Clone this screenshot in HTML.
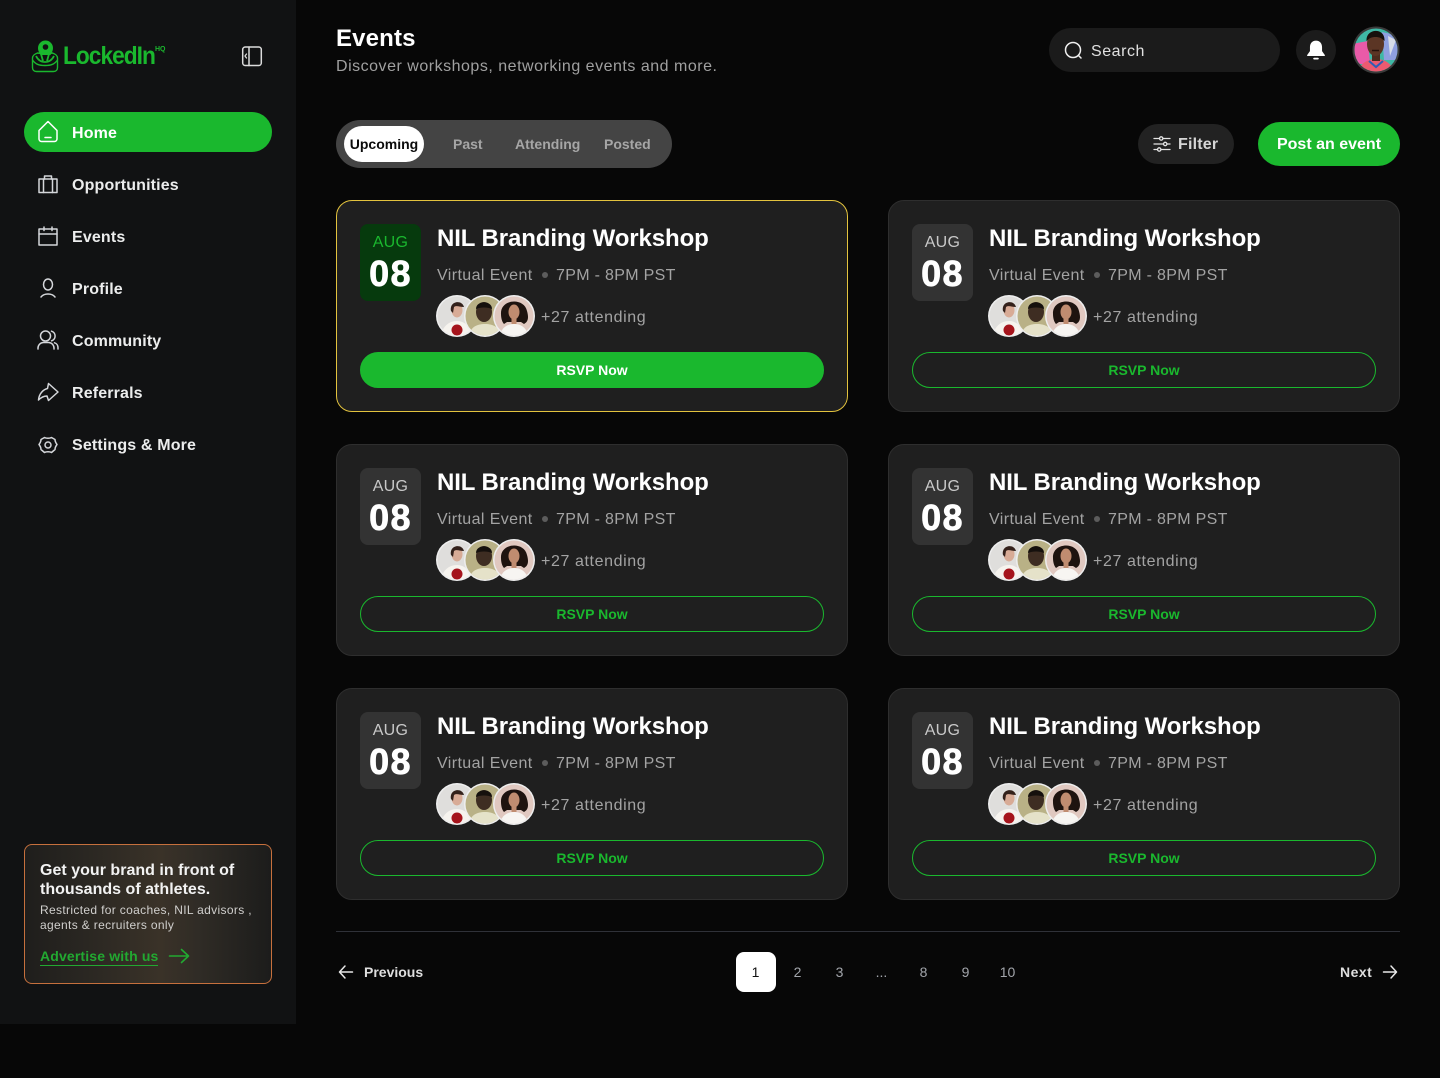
<!DOCTYPE html>
<html><head><meta charset="utf-8"><style>
*{box-sizing:border-box;margin:0;padding:0}
html,body{width:1440px;height:1078px;overflow:hidden;background:#070707;font-family:"Liberation Sans",sans-serif}
.a{position:absolute;white-space:nowrap}
#side{position:absolute;left:0;top:0;width:296px;height:1024px;background:#111213}
.nav{position:absolute;left:72px;font-size:16px;font-weight:bold;color:#eceded;line-height:20px;letter-spacing:.15px}
.ic{position:absolute;left:36px;width:24px;height:24px;fill:none;stroke:#d4d6da;stroke-width:1.5;stroke-linecap:round;stroke-linejoin:round}
.card{position:absolute;width:512px;height:212px;background:#1f1f1f;border:1px solid #2e2e2e;border-radius:16px}
.card.on{border-color:#e3c33e}
.date{position:absolute;left:23px;top:23px;width:61px;height:77px;background:#333;border-radius:8px;text-align:center}
.on .date{background:#063a0d}
.mon{position:absolute;left:0;right:0;top:9px;font-size:16px;line-height:20px;color:#c9c9c9;letter-spacing:.3px}
.on .mon{color:#1ab82e}
.day{position:absolute;left:0;right:0;top:30px;font-size:36px;line-height:40px;font-weight:bold;color:#fff;letter-spacing:1.4px;-webkit-text-stroke:.7px #fff}
.ttl{position:absolute;left:100px;top:22px;font-size:24px;line-height:32px;font-weight:bold;color:#fff;white-space:nowrap;letter-spacing:-.1px}
.sub{position:absolute;left:100px;top:65px;font-size:16px;line-height:20px;color:#a3a3a3;white-space:nowrap;letter-spacing:.4px}
.dot{position:absolute;left:205px;top:71px;width:6px;height:6px;border-radius:50%;background:#5c5c5c}
.sub2{position:absolute;left:219px;top:65px;font-size:16px;line-height:20px;color:#a3a3a3;white-space:nowrap;letter-spacing:.32px}
.av{position:absolute;left:98px;top:93px;width:102px;height:44px}
.att{position:absolute;left:204px;top:107px;font-size:16px;line-height:20px;color:#a3a3a3;white-space:nowrap;letter-spacing:.6px}
.btn{position:absolute;left:23px;top:151px;width:464px;height:36px;border:1px solid #1ab82e;border-radius:18px;text-align:center;font-size:14px;font-weight:bold;line-height:34px;color:#1ab82e}
.on .btn{background:#1ab82e;color:#fff}
.pg{position:absolute;top:952px;width:40px;height:40px;line-height:40px;text-align:center;font-size:14px;color:#a2a5ab}
</style></head><body>
<svg width="0" height="0" style="position:absolute"><defs>
<clipPath id="c1"><circle cx="22" cy="22" r="19.5"/></clipPath>
<symbol id="avs" viewBox="0 0 102 44">
<g transform="translate(0,0)"><circle cx="22" cy="22" r="21" fill="#eee"/><g clip-path="url(#c1)"><rect width="44" height="44" fill="#dfdedc"/><path d="M6 44c0-10 7-17 16-17 8 0 15 7 15 17z" fill="#f6f3ee"/><ellipse cx="22" cy="16" rx="5.500" ry="7.500" fill="#d8ab96"/><path d="M16 17c-2-10 11-12 13-4-4 0-8-2-10 0l-1 6z" fill="#33211b"/><circle cx="22" cy="36" r="5.500" fill="#a5141c"/></g></g>
<g transform="translate(28,0)"><circle cx="22" cy="22" r="21" fill="#eee"/><g clip-path="url(#c1)"><rect width="44" height="44" fill="#b9b186"/><path d="M6 44c0-10 7-14 16-14s16 4 16 14z" fill="#e5e2c9"/><ellipse cx="21" cy="18" rx="8" ry="10" fill="#3e2d22"/><path d="M13 15c0-9 16-9 16 0-4-2-12-2-16 0z" fill="#15100d"/></g></g>
<g transform="translate(57,0)"><circle cx="22" cy="22" r="21" fill="#eee"/><g clip-path="url(#c1)"><rect width="44" height="44" fill="#e0c8c0"/><path d="M8 44c0-9 6-14 14-14s14 5 14 14z" fill="#f7f5f2"/><path d="M9 20c-1-15 23-17 26-3 2 7 1 11-3 13l-3-2H15l-3 2c-2-2-3-6-3-10z" fill="#1e130f"/><ellipse cx="22" cy="18" rx="5.500" ry="7.500" fill="#c08c70"/><rect x="19.500" y="24" width="5" height="6" fill="#c08c70"/></g></g>
</symbol>
</defs></svg>

<div id="side"></div>
<!-- logo -->
<svg class="a" style="left:31px;top:39px" width="28" height="34" viewBox="0 0 28 34" fill="none" stroke="#1ab82e" stroke-width="1.400" stroke-linejoin="round"><path d="M7 9a7.500 7.500 0 1 1 15 0c0 3-1.500 5-2.500 7h-10C8.500 14 7 12 7 9z" fill="#1ab82e" stroke="none"/><circle cx="14.500" cy="8" r="2.800" fill="#111213" stroke="none"/><path d="M1.500 19c0-2 2-4 5-5l7 1 8-1c3 1 5 3 5 5v9.500c0 2.500-1.500 4-4 4h-17c-2.500 0-4-1.500-4-4z"/><path d="M1.500 21c3 4.500 7 5.500 12.500 5.500s9.500-1 12.500-5.500"/><path d="M5 17c2 4 5 6 9 6s7-2 9-6M10 15l2 7M18 15l-2 7" stroke-width="1.800"/></svg>
<div class="a" style="left:63px;top:40px;font-size:25px;line-height:32px;font-weight:bold;color:#1ab82e;letter-spacing:-1.100px;transform:scaleX(.91);transform-origin:left">LockedIn</div>
<div class="a" style="left:155px;top:45px;font-size:7px;line-height:9px;font-weight:bold;color:#1ab82e">HQ</div>
<svg class="a" style="left:240px;top:44px" width="24" height="24" viewBox="0 0 24 24" fill="none" stroke="#dcdcdc" stroke-width="1.500" stroke-linecap="round" stroke-linejoin="round"><rect x="2.700" y="3" width="18.600" height="18.500" rx="2.500"/><path d="M9 3v18.500"/><path d="M6.500 10l-1.500 2 1.500 2" stroke-width="1.300"/></svg>

<!-- nav -->
<div class="a" style="left:24px;top:112px;width:248px;height:40px;border-radius:20px;background:#1ab82e"></div>
<svg class="ic" style="top:120px;stroke:#fff" viewBox="0 0 24 24"><path d="M3 10.500 12 1.500l9 9V19a2.500 2.500 0 0 1-2.500 2.500h-13A2.500 2.500 0 0 1 3 19z"/><path d="M9 17.500h6"/></svg>
<div class="nav" style="top:124px;color:#fff">Home</div>
<svg class="ic" style="top:172px" viewBox="0 0 24 24"><rect x="3" y="7" width="18" height="13.500"/><path d="M7.500 7v13.500M16.500 7v13.500M8.500 7V4h7v3"/></svg>
<div class="nav" style="top:176px">Opportunities</div>
<svg class="ic" style="top:224px" viewBox="0 0 24 24"><rect x="3" y="5" width="18" height="16"/><path d="M3 10h18M8 3v3.500M16 3v3.500"/></svg>
<div class="nav" style="top:228px">Events</div>
<svg class="ic" style="top:276px" viewBox="0 0 24 24"><ellipse cx="12" cy="8.500" rx="4.500" ry="5.500"/><path d="M5 21c1.500-2 4-3 7-3s5.500 1 7 3"/></svg>
<div class="nav" style="top:280px">Profile</div>
<svg class="ic" style="top:328px" viewBox="0 0 24 24"><circle cx="9.500" cy="8" r="5"/><path d="M15.500 3.200a5 5 0 0 1 0 9.600M2 21v-1c0-3 2.500-5.500 5.500-5.500h5c3 0 5.500 2.500 5.500 5.500v1M18.500 14.800c2 .5 3.500 2.500 3.500 5V21"/></svg>
<div class="nav" style="top:332px">Community</div>
<svg class="ic" style="top:380px" viewBox="0 0 24 24"><path d="M12.500 3.500 22 12l-9.500 8.500-1.500-4.500c-3 0-6 1.500-8.500 4 .5-6 4.500-10.500 9-11.500z"/></svg>
<div class="nav" style="top:384px">Referrals</div>
<svg class="ic" style="top:432px" viewBox="0 0 24 24"><path d="M8.500 5.500c1.500 1 5.500 1 7 0L19 7.500c0 2 .5 3 2 5-1.500 2-2 3-2 5l-3.500 3c-1.500-1-5.500-1-7 0L5 17.500c0-2-.5-3-2-5 1.500-2 2-3 2-5z"/><circle cx="12" cy="13" r="3"/></svg>
<div class="nav" style="top:436px">Settings &amp; More</div>

<!-- promo -->
<div class="a" style="left:24px;top:844px;width:248px;height:140px;border-radius:8px;border:1px solid #c6703d;background:linear-gradient(90deg,#1f1e1c 0%,#2a2722 25%,#3a3228 55%,#302c26 70%,#1c1c1b 100%)"></div>
<div class="a" style="left:40px;top:861px;font-size:16px;line-height:19px;font-weight:bold;color:#f2f2f2;letter-spacing:.02px">Get your brand in front of<br>thousands of athletes.</div>
<div class="a" style="left:40px;top:903px;font-size:12px;line-height:15px;color:#d0cfcd;letter-spacing:.34px">Restricted for coaches, NIL advisors ,<br>agents &amp; recruiters only</div>
<div class="a" style="left:40px;top:948px;font-size:14px;line-height:17px;font-weight:bold;color:#22a931;border-bottom:1px solid #22a931;letter-spacing:.15px">Advertise with us</div>
<svg class="a" style="left:168px;top:946px" width="22" height="20" viewBox="0 0 22 20" fill="none" stroke="#22a931" stroke-width="1.600" stroke-linecap="round" stroke-linejoin="round"><path d="M1.500 10h19M13.500 3.500 20.500 10l-7 6.500"/></svg>

<!-- header -->
<div class="a" style="left:336px;top:24px;font-size:24px;line-height:30px;font-weight:bold;color:#fff;letter-spacing:.15px">Events</div>
<div class="a" style="left:336px;top:57px;font-size:16px;line-height:20px;color:#a0a0a0;letter-spacing:.51px">Discover workshops, networking events and more.</div>
<div class="a" style="left:1049px;top:28px;width:231px;height:44px;border-radius:22px;background:#1b1b1b"></div>
<svg class="a" style="left:1063px;top:40px" width="20" height="20" viewBox="0 0 20 20" fill="none" stroke="#f0f0f0" stroke-width="1.500" stroke-linecap="round"><circle cx="10" cy="10" r="7.500"/><path d="M15.500 15.500 18 18"/></svg>
<div class="a" style="left:1091px;top:42px;font-size:16px;line-height:20px;color:#e0e0e0;letter-spacing:.55px">Search</div>
<div class="a" style="left:1296px;top:30px;width:40px;height:40px;border-radius:50%;background:#1b1b1b"></div>
<svg class="a" style="left:1305px;top:39px" width="22" height="22" viewBox="0 0 20 20" fill="#fff"><path d="M10 1.500c-3.500 0-5.500 2.600-5.500 6v3.500L2 14.500c-.3.500 0 1 .5 1h15c.5 0 .8-.5.5-1L15.500 11V7.500c0-3.400-2-6-5.500-6z"/><rect x="7.500" y="17" width="5" height="1.600" rx=".8"/></svg>
<svg class="a" style="left:1352px;top:26px" width="48" height="48" viewBox="0 0 48 48"><defs><clipPath id="c2"><circle cx="24" cy="24" r="21.500"/></clipPath></defs><circle cx="24" cy="24" r="23.500" fill="#3a3a3a"/><g clip-path="url(#c2)"><rect width="48" height="48" fill="#3fb8a5"/><path d="M0 18l16-3 2 23H0z" fill="#e95aa8"/><path d="M30 6l18 4v24H32z" fill="#8f9fe0"/><path d="M36 10l8 4-6 16z" fill="#d7dce8"/><path d="M6 48c1-10 9-15 18-15s17 5 18 15z" fill="#ec5a70"/><path d="M17 35l7 6 7-6" stroke="#2f5db5" stroke-width="2" fill="none"/><rect x="20" y="27" width="8" height="8" fill="#4d2c1e"/><ellipse cx="23.500" cy="18" rx="8.500" ry="12" fill="#5b3524"/><path d="M14.500 15c-1-13 19-14 18 0-3-3-5-4-9-4s-6 1-9 4z" fill="#17100c"/><path d="M20 24.500h7" stroke="#26120b" stroke-width="1.600"/></g></svg>

<!-- tabs -->
<div class="a" style="left:336px;top:120px;width:336px;height:48px;border-radius:24px;background:#444"></div>
<div class="a" style="left:344px;top:126px;width:80px;height:36px;border-radius:18px;background:#fff"></div>
<div class="a" style="left:344px;top:126px;width:80px;text-align:center;font-size:14px;line-height:36px;font-weight:bold;color:#0b0b0b">Upcoming</div>
<div class="a" style="left:453px;top:126px;font-size:14px;line-height:36px;font-weight:bold;color:#a6a6a6">Past</div>
<div class="a" style="left:515px;top:126px;font-size:14px;line-height:36px;font-weight:bold;color:#a6a6a6">Attending</div>
<div class="a" style="left:604px;top:126px;font-size:14px;line-height:36px;font-weight:bold;color:#a6a6a6">Posted</div>
<div class="a" style="left:1138px;top:124px;width:96px;height:40px;border-radius:20px;background:#222"></div>
<svg class="a" style="left:1153px;top:135px" width="18" height="18" viewBox="0 0 18 18" fill="none" stroke="#e4e4e4" stroke-width="1.300" stroke-linecap="round"><path d="M1 3.500h5.500M10 3.500h7M1 9h9.500M14 9h3M1 14.500h3.500M8 14.500h9"/><circle cx="8.200" cy="3.500" r="1.700"/><circle cx="12.200" cy="9" r="1.700"/><circle cx="6.200" cy="14.500" r="1.700"/></svg>
<div class="a" style="left:1178px;top:135px;font-size:16px;line-height:20px;font-weight:bold;color:#d6d6d6;letter-spacing:.2px">Filter</div>
<div class="a" style="left:1258px;top:122px;width:142px;height:44px;border-radius:22px;background:#1ab82e;text-align:center;font-size:16px;line-height:46px;font-weight:bold;color:#fff">Post an event</div>

<!-- cards -->
<div class="card on" style="left:336px;top:200px"><div class="date"><div class="mon">AUG</div><div class="day">08</div></div><div class="ttl">NIL Branding Workshop</div><div class="sub">Virtual Event</div><div class="dot"></div><div class="sub2">7PM - 8PM PST</div><svg class="av"><use href="#avs"/></svg><div class="att">+27 attending</div><div class="btn">RSVP Now</div></div>
<div class="card" style="left:888px;top:200px"><div class="date"><div class="mon">AUG</div><div class="day">08</div></div><div class="ttl">NIL Branding Workshop</div><div class="sub">Virtual Event</div><div class="dot"></div><div class="sub2">7PM - 8PM PST</div><svg class="av"><use href="#avs"/></svg><div class="att">+27 attending</div><div class="btn">RSVP Now</div></div>
<div class="card" style="left:336px;top:444px"><div class="date"><div class="mon">AUG</div><div class="day">08</div></div><div class="ttl">NIL Branding Workshop</div><div class="sub">Virtual Event</div><div class="dot"></div><div class="sub2">7PM - 8PM PST</div><svg class="av"><use href="#avs"/></svg><div class="att">+27 attending</div><div class="btn">RSVP Now</div></div>
<div class="card" style="left:888px;top:444px"><div class="date"><div class="mon">AUG</div><div class="day">08</div></div><div class="ttl">NIL Branding Workshop</div><div class="sub">Virtual Event</div><div class="dot"></div><div class="sub2">7PM - 8PM PST</div><svg class="av"><use href="#avs"/></svg><div class="att">+27 attending</div><div class="btn">RSVP Now</div></div>
<div class="card" style="left:336px;top:688px"><div class="date"><div class="mon">AUG</div><div class="day">08</div></div><div class="ttl">NIL Branding Workshop</div><div class="sub">Virtual Event</div><div class="dot"></div><div class="sub2">7PM - 8PM PST</div><svg class="av"><use href="#avs"/></svg><div class="att">+27 attending</div><div class="btn">RSVP Now</div></div>
<div class="card" style="left:888px;top:688px"><div class="date"><div class="mon">AUG</div><div class="day">08</div></div><div class="ttl">NIL Branding Workshop</div><div class="sub">Virtual Event</div><div class="dot"></div><div class="sub2">7PM - 8PM PST</div><svg class="av"><use href="#avs"/></svg><div class="att">+27 attending</div><div class="btn">RSVP Now</div></div>

<!-- pagination -->
<div class="a" style="left:336px;top:931px;width:1064px;height:1px;background:#2f3138"></div>
<svg class="a" style="left:336px;top:962px" width="20" height="20" viewBox="0 0 20 20" fill="none" stroke="#e8e8e8" stroke-width="1.500" stroke-linecap="round" stroke-linejoin="round"><path d="M16.500 10h-13M9 4 3.500 10 9 16"/></svg>
<div class="a" style="left:364px;top:962px;font-size:14px;line-height:20px;font-weight:bold;color:#dedede">Previous</div>
<div class="a" style="left:736px;top:952px;width:40px;height:40px;border-radius:8px;background:#fff"></div>
<div class="pg" style="left:735.500px;color:#111">1</div>
<div class="pg" style="left:777.500px">2</div>
<div class="pg" style="left:819.500px">3</div>
<div class="pg" style="left:861.500px">...</div>
<div class="pg" style="left:903.500px">8</div>
<div class="pg" style="left:945.500px">9</div>
<div class="pg" style="left:987.500px">10</div>
<div class="a" style="left:1340px;top:962px;font-size:14px;line-height:20px;font-weight:bold;color:#dedede;letter-spacing:.5px">Next</div>
<svg class="a" style="left:1380px;top:962px" width="20" height="20" viewBox="0 0 20 20" fill="none" stroke="#e8e8e8" stroke-width="1.500" stroke-linecap="round" stroke-linejoin="round"><path d="M3.500 10h13M11 4l5.500 6-5.500 6"/></svg>
</body></html>
